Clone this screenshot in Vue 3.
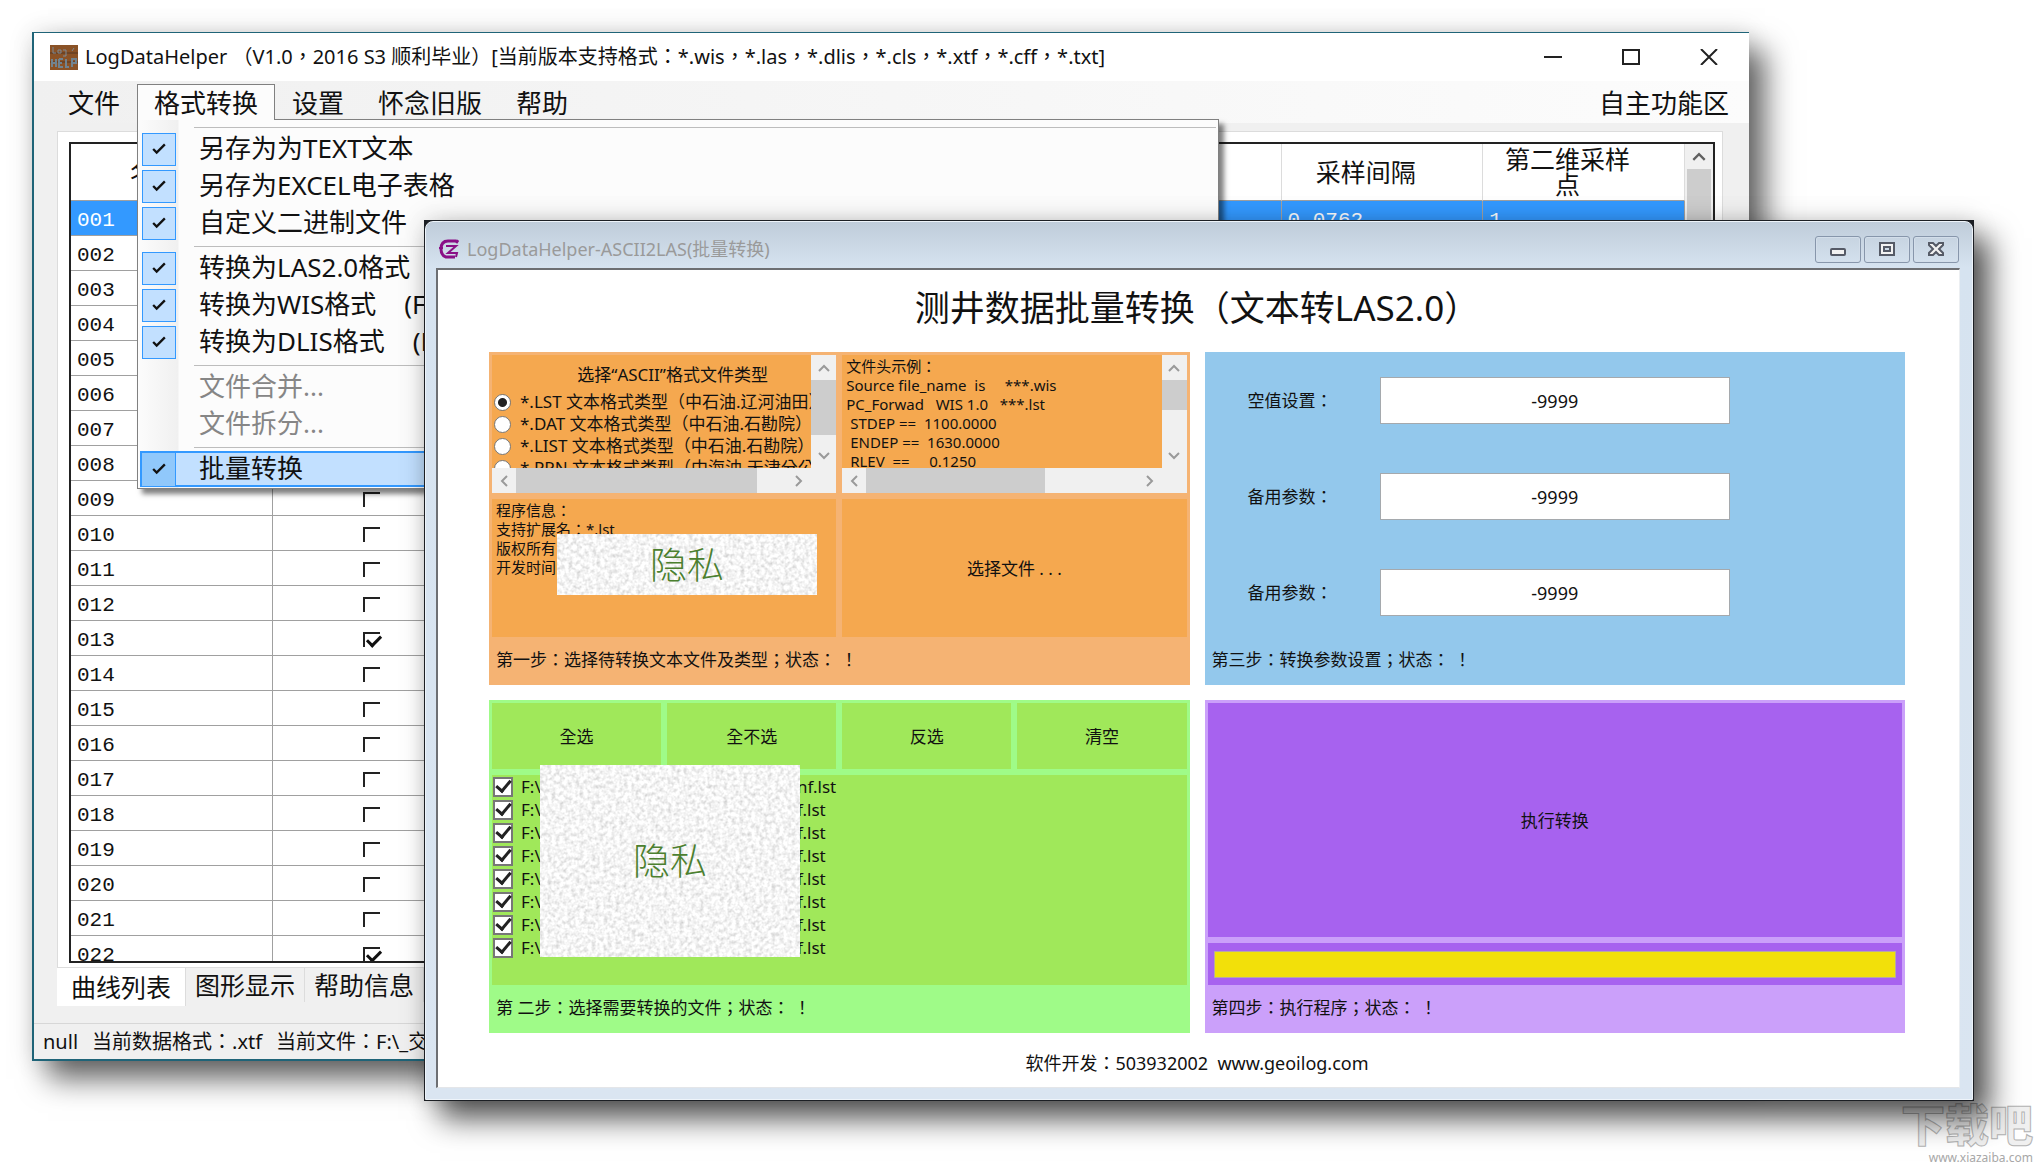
<script setup>
import { ref } from 'vue'

const menus = [
  { label: '文件' },
  { label: '格式转换', open: true },
  { label: '设置' },
  { label: '怀念旧版' },
  { label: '帮助' },
]

const menuGroups = [
  [
    { label: '另存为为TEXT文本', checked: true },
    { label: '另存为EXCEL电子表格', checked: true },
    { label: '自定义二进制文件', checked: true },
  ],
  [
    { label: '转换为LAS2.0格式', checked: true },
    { label: '转换为WIS格式', hint: '(F', checked: true },
    { label: '转换为DLIS格式', hint: '(F', checked: true },
  ],
  [
    { label: '文件合并...', disabled: true },
    { label: '文件拆分...', disabled: true },
  ],
  [{ label: '批量转换', checked: true, active: true }],
]

const curves = ref(
  Array.from({ length: 22 }, (_, i) => ({
    id: String(i + 1).padStart(3, '0'),
    checked: i === 12 || i === 21,
    step: i === 0 ? '0.0762' : '',
    points: i === 0 ? '1' : '',
  }))
)

const tabs = ['曲线列表', '图形显示', '帮助信息']

const fileType = ref(0)
const fileTypes = [
  '*.LST 文本格式类型（中石油.辽河油田）',
  '*.DAT 文本格式类型（中石油.石勘院）',
  '*.LIST 文本格式类型（中石油.石勘院）',
  '*.PRN 文本格式类型（中海油.天津分公司）',
]

const headerSample = [
  '文件头示例：',
  'Source file_name  is     ***.wis',
  'PC_Forwad   WIS 1.0   ***.lst',
  ' STDEP ==  1100.0000',
  ' ENDEP ==  1630.0000',
  ' RLEV  ==     0.1250',
].join('\n')

const programInfo = ['程序信息：', '支持扩展名：*.lst', '版权所有', '开发时间'].join('\n')

const params = ref([
  { id: 'null-value', label: '空值设置：', value: '-9999' },
  { id: 'spare-1', label: '备用参数：', value: '-9999' },
  { id: 'spare-2', label: '备用参数：', value: '-9999' },
])

const selectActions = ['全选', '全不选', '反选', '清空']
const files = ref(
  Array.from({ length: 8 }, (_, i) => ({ tail: i === 0 ? 'nf.lst' : 'f.lst', checked: true }))
)
</script>

<template>
  <div class="desktop">
    <svg class="defs" aria-hidden="true">
      <filter id="grain" x="0" y="0" width="100%" height="100%">
        <feTurbulence type="fractalNoise" baseFrequency="0.25" numOctaves="2" seed="4" />
        <feColorMatrix type="matrix" values="0.7 0 0 0 0.56  0.7 0 0 0 0.56  0.7 0 0 0 0.56  0 0 0 0 1" />
      </filter>
    </svg>

    <section class="main-window">
      <header class="main-title">
        <svg class="app-icon" viewBox="0 0 28 25" aria-hidden="true">
          <rect width="28" height="25" fill="#8a5226" />
          <path d="M0 8h28M0 17h28" stroke="#6f4424" stroke-width="2" />
          <path d="M3 2v6h3M8 5h3v3h-3zM13 5h3v6h-3M24 3l-2 3" stroke="#7d8a96" stroke-width="1" fill="none" />
          <path d="M2 14v8M6 14v8M2 18h4M9 14v8h4M9 14h4M9 18h3M16 14v8h3M22 22v-8h4v4h-4" stroke="#71838f" stroke-width="2" fill="none" />
        </svg>
        <h1>LogDataHelper （V1.0，2016 S3 顺利毕业）[当前版本支持格式：*.wis，*.las，*.dlis，*.cls，*.xtf，*.cff，*.txt]</h1>
        <div class="main-controls">
          <button type="button" aria-label="最小化"><svg viewBox="0 0 18 16"><path d="M0 8h18" /></svg></button>
          <button type="button" aria-label="最大化"><svg viewBox="0 0 18 16"><path d="M1 1h16v14H1z" /></svg></button>
          <button type="button" aria-label="关闭"><svg viewBox="0 0 18 16"><path d="M1 0l16 16M17 0L1 16" /></svg></button>
        </div>
      </header>

      <nav class="menubar">
        <div v-for="m in menus" :key="m.label" class="menu">
          <button type="button" class="menu-head" :class="{ open: m.open }">{{ m.label }}</button>
          <div v-if="m.open" class="dropdown">
            <div v-for="(group, g) in menuGroups" :key="g" class="menu-group">
              <button
                v-for="item in group"
                :key="item.label"
                type="button"
                class="menu-item"
                :class="{ active: item.active }"
                :disabled="item.disabled"
              >
                <span class="tick" :class="{ on: item.checked }">
                  <svg v-if="item.checked" viewBox="0 0 12 10"><path d="M1 5l3 3 7-7" /></svg>
                </span>
                <span class="item-text">{{ item.label }}</span>
                <span v-if="item.hint" class="item-text hint">{{ item.hint }}</span>
              </button>
            </div>
          </div>
        </div>
        <button type="button" class="menu-head zone">自主功能区</button>
      </nav>

      <div class="workspace">
        <div class="page">
          <div class="grid">
            <div class="grid-view">
              <table>
                <thead>
                  <tr>
                    <th>名称</th>
                    <th></th><th></th><th></th><th></th><th></th>
                    <th>采样间隔</th>
                    <th>第二维采样点</th>
                  </tr>
                </thead>
                <tbody>
                  <tr v-for="(c, i) in curves" :key="c.id" :class="{ selected: i === 0 }">
                    <td>{{ c.id }}</td>
                    <td class="mark"><input v-model="c.checked" type="checkbox" :aria-label="c.id" /></td>
                    <td></td><td></td><td></td><td></td>
                    <td>{{ c.step }}</td>
                    <td>{{ c.points }}</td>
                  </tr>
                </tbody>
              </table>
            </div>
            <div class="grid-scroll">
              <svg viewBox="0 0 14 10"><path d="M2 8l5-5 5 5" /></svg>
              <div class="grid-thumb"></div>
            </div>
          </div>
        </div>
        <div class="tabs">
          <button v-for="(t, i) in tabs" :key="t" type="button" :class="{ current: i === 0 }">{{ t }}</button>
        </div>
      </div>

      <footer class="status">
        <span>null</span><span>当前数据格式：.xtf</span><span>当前文件：F:\_交</span>
      </footer>
    </section>

    <section class="dialog">
      <div class="frame">
        <header class="dialog-title">
          <svg class="dialog-icon" viewBox="0 0 20 20" aria-hidden="true">
            <path d="M19 1l-2 3M17 2H9C4 2 2 5 2 10c0 4 2 7 5 8h9" fill="none" stroke="#8a0f86" stroke-width="3" />
            <path d="M0 9h4M7 7h10l-8 7h9l-1 4" fill="none" stroke="#8a0f86" stroke-width="2" />
          </svg>
          <h2>LogDataHelper-ASCII2LAS(批量转换)</h2>
          <div class="dialog-controls">
            <button type="button" aria-label="最小化"><svg viewBox="0 0 18 16"><rect x="2" y="8" width="14" height="6" rx="1" /></svg></button>
            <button type="button" aria-label="还原"><svg viewBox="0 0 18 16"><path fill-rule="evenodd" d="M2 2h14v12H2zM6 6h6v4H6z" /></svg></button>
            <button type="button" aria-label="关闭"><svg viewBox="0 0 18 16"><path d="M2 2h4l3 3 3-3h4v2l-4 4 4 4v2h-4l-3-3-3 3H2v-2l4-4-4-4z" /></svg></button>
          </div>
        </header>

        <main class="client">
          <h3>测井数据批量转换（文本转LAS2.0）</h3>
          <div class="steps">
            <section class="step orange">
              <div class="cells two">
                <div class="scroller">
                  <div class="view types">
                    <p class="types-head">选择“ASCII”格式文件类型</p>
                    <label v-for="(t, i) in fileTypes" :key="t">
                      <input v-model="fileType" type="radio" name="file-type" :value="i" />{{ t }}
                    </label>
                  </div>
                  <div class="vbar">
                    <svg viewBox="0 0 12 8"><path d="M1 7l5-5 5 5" /></svg>
                    <div class="vthumb long"></div>
                    <svg viewBox="0 0 12 8"><path d="M1 1l5 5 5-5" /></svg>
                  </div>
                  <div class="hbar">
                    <svg viewBox="0 0 8 12"><path d="M7 1L2 6l5 5" /></svg>
                    <div class="hthumb long"></div>
                    <svg viewBox="0 0 8 12"><path d="M1 1l5 5-5 5" /></svg>
                  </div>
                </div>
                <div class="scroller">
                  <pre class="view small">{{ headerSample }}</pre>
                  <div class="vbar">
                    <svg viewBox="0 0 12 8"><path d="M1 7l5-5 5 5" /></svg>
                    <div class="vthumb"></div>
                    <svg viewBox="0 0 12 8"><path d="M1 1l5 5 5-5" /></svg>
                  </div>
                  <div class="hbar">
                    <svg viewBox="0 0 8 12"><path d="M7 1L2 6l5 5" /></svg>
                    <div class="hthumb"></div>
                    <svg viewBox="0 0 8 12"><path d="M1 1l5 5-5 5" /></svg>
                  </div>
                </div>
                <div class="cell info">
                  <pre class="small">{{ programInfo }}</pre>
                  <div class="privacy info-mask"><svg><rect width="100%" height="100%" filter="url(#grain)" /></svg><span>隐私</span></div>
                </div>
                <button type="button" class="cell">选择文件 . . .</button>
              </div>
              <p class="step-text">第一步：选择待转换文本文件及类型；状态： ！</p>
            </section>

            <section class="step blue">
              <div class="params">
                <div v-for="p in params" :key="p.id" class="param">
                  <label :for="p.id">{{ p.label }}</label>
                  <input :id="p.id" v-model="p.value" type="text" />
                </div>
              </div>
              <p class="step-text">第三步：转换参数设置；状态： ！</p>
            </section>

            <section class="step green">
              <div class="cells four">
                <button v-for="a in selectActions" :key="a" type="button" class="cell">{{ a }}</button>
              </div>
              <div class="cell files">
                <label v-for="(f, i) in files" :key="i">
                  <input v-model="f.checked" type="checkbox" />
                  <span class="drive">F:\</span><span>{{ f.tail }}</span>
                </label>
                <div class="privacy file-mask"><svg><rect width="100%" height="100%" filter="url(#grain)" /></svg><span>隐私</span></div>
              </div>
              <p class="step-text">第 二步：选择需要转换的文件；状态： ！</p>
            </section>

            <section class="step purple">
              <button type="button" class="cell run">执行转换</button>
              <div class="cell bar"><div class="progress" role="progressbar" aria-label="执行转换"></div></div>
              <p class="step-text">第四步：执行程序；状态： ！</p>
            </section>
          </div>
          <p class="credit">软件开发：503932002&nbsp; www.geoilog.com</p>
        </main>
      </div>
    </section>

    <div class="watermark">
      <strong>下载吧</strong>
      <span>www.xiazaiba.com</span>
    </div>
  </div>
</template>

<style>
body {
  background: #fff;
}
</style>

<style scoped>
* {
  box-sizing: border-box;
}

.desktop {
  position: relative;
  min-height: 100vh;
  overflow: hidden;
  background: #fff;
  color: #111;
  font-family: "Noto Sans", "Noto Sans CJK TC", "Noto Sans CJK SC", sans-serif;
  font-size: 17px;
  line-height: 22px;
}

.defs {
  position: absolute;
  width: 0;
  height: 0;
}

h1, h2, h3, p, pre {
  margin: 0;
  font-family: inherit;
  font-weight: 400;
}

button {
  margin: 0;
  padding: 0;
  border: 0;
  background: none;
  color: inherit;
  font: inherit;
}

/* main window */
.main-window {
  position: absolute;
  z-index: 0;
  inset: 32px 290px 105px 32px;
  display: flex;
  flex-direction: column;
  border: solid #1f6478;
  border-width: 1px 0 2px 2px;
  background: #f0f0f0;
  box-shadow: 16px 18px 28px rgba(0, 0, 0, 0.6), 0 0 24px rgba(0, 0, 0, 0.12);
}

.main-title {
  display: flex;
  align-items: center;
  height: 48px;
  padding: 0 31px 0 16px;
  background: #fff;
}

.app-icon {
  width: 28px;
  height: 25px;
  margin-right: 7px;
}

.main-title h1 {
  flex: 1;
  font-size: 20px;
  line-height: 28px;
  white-space: nowrap;
}

.main-controls {
  display: flex;
  gap: 60px;
}

.main-controls svg {
  display: block;
  width: 18px;
  height: 16px;
  fill: none;
  stroke: #222;
  stroke-width: 2;
}

.menubar {
  display: flex;
  align-items: flex-start;
  height: 42px;
  padding: 3px 3px 0 17px;
  background: linear-gradient(90deg, #f0f0f0, #fcfcfc);
  font-size: 26px;
}

.menu {
  position: relative;
}

.menu-head {
  height: 36px;
  padding: 0 16px;
  border: 1px solid transparent;
  border-bottom: 0;
  line-height: 34px;
}

.menu-head.open {
  position: relative;
  z-index: 3;
  background: #fcfcfc;
  border-color: #808080;
}

.zone {
  margin-left: auto;
}

.dropdown {
  position: absolute;
  z-index: 2;
  top: 35px;
  left: 0;
  width: 1082px;
  padding: 7px 2px 0;
  border: 1px solid #808080;
  background: linear-gradient(90deg, #fcfcfc, #f0f0f0 40px, #fcfcfc 41px);
  box-shadow: 5px 5px 5px rgba(0, 0, 0, 0.5);
}

.menu-group {
  padding: 4px 0;
  background: linear-gradient(#bdbdbd, #bdbdbd) 54px 0 / 100% 1px no-repeat;
}

.menu-group:last-child {
  padding-bottom: 0;
}

.menu-item {
  display: flex;
  align-items: center;
  width: 100%;
  height: 36px;
  margin-bottom: 1px;
  border: 2px solid transparent;
  text-align: left;
  line-height: 32px;
}

.menu-item:disabled {
  color: #868686;
}

.menu-item.active {
  border-color: #3399ff;
  background: #c2e0ff;
}

.item-text {
  padding-bottom: 2px;
}

.tick {
  display: flex;
  align-items: center;
  justify-content: center;
  width: 34px;
  height: 33px;
  margin-right: 23px;
}

.tick.on {
  border: 1px solid #3399ff;
  background: #c2e0ff;
}

.active .tick.on {
  border-width: 0 1px 0 0;
  background: #90c8fb;
}

.tick svg {
  width: 14px;
  height: 12px;
  fill: none;
  stroke: #111;
  stroke-width: 2;
}

.hint {
  margin-left: 28px;
}

.workspace {
  display: flex;
  flex: 1;
  flex-direction: column;
  min-height: 0;
  padding: 8px 26px 17px 23px;
}

.page {
  flex: 1;
  min-height: 0;
  padding: 10px 7px 4px 11px;
  border: 1px solid #dcdcdc;
  background: #fff;
}

.grid {
  display: flex;
  height: 100%;
  border: 2px solid #222;
}

.grid-view {
  flex: 1;
  overflow: hidden;
}

table {
  width: 100%;
  border-collapse: separate;
  border-spacing: 0;
  table-layout: fixed;
}

th {
  height: 57px;
  padding: 0 52px 0 20px;
  border-right: 1px solid #dcdcdc;
  border-bottom: 1px solid #a0a0a0;
  font-size: 25px;
  font-weight: 400;
  line-height: 25px;
}

td {
  height: 35px;
  padding: 6px 6px 0;
  border-right: 1px solid #a0a0a0;
  border-bottom: 1px solid #a0a0a0;
  font-family: "Liberation Mono", monospace;
  font-size: 21px;
  line-height: 28px;
}

.selected td {
  background: #3399ff;
  color: #fff;
}

.mark {
  padding: 4px 9px 0 6px;
  text-align: center;
}

.mark input {
  width: 17px;
  height: 15px;
  margin: 0;
  border: solid #222;
  border-width: 2px 0 0 2px;
  appearance: none;
  vertical-align: middle;
}

.mark input:checked::before {
  content: "";
  display: block;
  width: 11px;
  height: 6px;
  margin: 1px 0 0 2px;
  border: solid #111;
  border-width: 0 0 3px 3px;
  transform: rotate(-45deg);
}

.grid-scroll {
  display: flex;
  flex-direction: column;
  align-items: center;
  width: 28px;
  background: #f0f0f0;
}

.grid-scroll svg {
  width: 16px;
  height: 25px;
  fill: none;
  stroke: #606060;
  stroke-width: 2;
}

.grid-thumb {
  width: 24px;
  height: 240px;
  background: #cdcdcd;
}

.tabs {
  display: flex;
  align-items: flex-start;
  height: 38px;
}

.tabs button {
  height: 34px;
  padding: 0 9px;
  border-right: 1px solid #dcdcdc;
  font-size: 25px;
  line-height: 28px;
}

.tabs .current {
  height: 38px;
  padding: 0 14px;
  background: #fff;
  line-height: 32px;
}

.status {
  display: flex;
  gap: 14px;
  height: 36px;
  padding-left: 9px;
  border-top: 1px solid #d7d7d7;
  font-size: 20px;
  line-height: 36px;
}

/* dialog */
.dialog {
  position: absolute;
  z-index: 1;
  top: 220px;
  right: 65px;
  left: 424px;
  padding: 1px;
  background: #1c1f24;
  box-shadow: 16px 18px 28px rgba(0, 0, 0, 0.65), 0 0 24px rgba(0, 0, 0, 0.15);
}

.frame {
  padding: 0 12px 11px 10px;
  border: 1px solid #eef4fa;
  border-radius: 8px 8px 0 0;
  background: linear-gradient(#bfccda, #d6e3f0 46px, #dae5f1);
}

.dialog-title {
  display: flex;
  align-items: center;
  height: 46px;
}

.dialog-icon {
  width: 20px;
  height: 20px;
  margin: 8px 8px 0 3px;
}

.dialog-title h2 {
  flex: 1;
  padding-top: 8px;
  color: #9a9a9a;
  font-size: 18px;
}

.dialog-controls {
  display: flex;
  gap: 3px;
  padding: 8px 1px 0 0;
}

.dialog-controls button {
  display: flex;
  align-items: center;
  justify-content: center;
  width: 46px;
  height: 27px;
  border: 1px solid #8796ab;
  border-radius: 3px;
  box-shadow: inset 0 0 0 1px #d3deea;
}

.dialog-controls svg {
  width: 18px;
  height: 16px;
  fill: #f2f2f2;
  stroke: #555a66;
  stroke-width: 2;
}

.client {
  padding: 0 54px 12px 51px;
  border: solid;
  border-width: 2px 1px 1px 2px;
  border-color: #6d6f73 #eceff2 #e4e6e9 #6d6f73;
  background: #fff;
}

.client h3 {
  padding: 14px 0 20px;
  font-size: 35px;
  line-height: 48px;
  text-align: center;
}

.steps {
  display: grid;
  grid-template-columns: 1fr 1fr;
  gap: 15px;
}

.step {
  display: flex;
  flex-direction: column;
  min-width: 0;
  height: 333px;
  padding: 3px;
}

.step-text {
  margin-top: auto;
  padding: 0 4px;
  line-height: 44px;
}

.orange { background: #f5b373; }
.blue { background: #93c8ec; }
.green { background: #9ffb88; }
.purple { background: #cba0fa; }

.cells {
  display: grid;
  gap: 6px;
}

.two {
  grid-template-columns: 1fr 1fr;
  grid-template-rows: 138px 138px;
}

.four {
  grid-template-columns: repeat(4, 1fr);
  grid-template-rows: 66px;
}

.cell,
.scroller {
  min-width: 0;
}

button.cell {
  padding-top: 2px;
}

.orange .cell,
.scroller {
  background: #f5a84f;
}

.green .cell { background: #a0e85a; }
.purple .cell { background: #a762ef; }

.scroller {
  display: grid;
  grid-template-columns: 1fr 25px;
  grid-template-rows: 113px 25px;
}

.view {
  min-width: 0;
  overflow: hidden;
  white-space: pre;
}

.small {
  padding: 2px 4px;
  font-size: 15px;
  line-height: 19px;
}

.types-head {
  padding: 4px 0 0 42px;
  line-height: 32px;
  text-align: center;
}

.types label {
  display: flex;
  align-items: center;
  gap: 9px;
  height: 22px;
  padding-left: 2px;
}

.types input {
  flex: none;
  width: 17px;
  height: 17px;
  margin: 0;
  border: 1px solid #777;
  border-radius: 50%;
  background: #fff;
  appearance: none;
}

.types input:checked {
  background: radial-gradient(#222 0 4px, #fff 5px);
}

.vbar,
.hbar {
  display: flex;
  align-items: center;
  background: #f0f0f0;
}

.vbar {
  flex-direction: column;
}

.hbar {
  grid-column: 1 / 3;
}

.vbar svg,
.hbar svg {
  flex: none;
  width: 12px;
  height: 12px;
  margin: 6px;
  fill: none;
  stroke: #9a9a9a;
  stroke-width: 2;
}

.vbar svg {
  margin: 7px 6px 6px;
}

.vthumb {
  width: 100%;
  height: 30px;
  margin-bottom: auto;
  background: #cdcdcd;
}

.vthumb.long {
  height: 55px;
}

.hthumb {
  width: 52%;
  height: 100%;
  background: #cdcdcd;
}

.hthumb.long {
  width: 70%;
}

.hbar svg:last-child {
  margin-right: 31px;
  margin-left: auto;
}

.info,
.files {
  position: relative;
}

.privacy {
  position: absolute;
  display: grid;
  place-items: center;
  width: 260px;
  color: #4c8030;
  font-size: 37px;
  font-weight: 300;
  line-height: 48px;
}

.privacy svg,
.privacy span {
  grid-area: 1 / 1;
}

.privacy svg {
  width: 100%;
  height: 100%;
}

.privacy span {
  z-index: 1;
}

.info-mask {
  top: 35px;
  left: 65px;
  height: 61px;
}

.file-mask {
  top: -10px;
  left: 48px;
  height: 192px;
}

.params {
  display: flex;
  flex-direction: column;
  gap: 49px;
  margin: 0 -3px;
  padding-top: 22px;
}

.param {
  display: grid;
  grid-template-columns: 1fr 50% 1fr;
  align-items: center;
}

.param label {
  padding-left: 43px;
}

.param input {
  width: 100%;
  height: 47px;
  border: 1px solid #a5a9ad;
  background: #fff;
  color: inherit;
  font: inherit;
  font-size: 18px;
  text-align: center;
}

.files {
  height: 210px;
  margin-top: 6px;
}

.files label {
  display: flex;
  align-items: center;
  height: 23px;
  padding-left: 1px;
}

.files input {
  display: flex;
  align-items: center;
  justify-content: center;
  width: 20px;
  height: 20px;
  margin: 0 8px 0 0;
  border: 2px solid #777;
  background: #fff;
  appearance: none;
}

.files input:checked::before {
  content: "";
  width: 12px;
  height: 6px;
  margin-top: -4px;
  border: solid #222;
  border-width: 0 0 3px 3px;
  transform: rotate(-50deg);
}

.drive {
  width: 276px;
}

.run {
  height: 234px;
}

.bar {
  height: 42px;
  margin-top: 6px;
  padding: 8px 6px;
}

.progress {
  height: 27px;
  border: 1px solid #b9a9a0;
  background: #f2e00a;
}

.credit {
  padding: 19px 0 1px;
  font-size: 18px;
  text-align: center;
}

.watermark {
  position: absolute;
  right: 6px;
  bottom: 1px;
  display: flex;
  flex-direction: column;
  align-items: flex-end;
  color: #f0f0f0;
}

.watermark strong {
  font-size: 44px;
  font-weight: 900;
  line-height: 52px;
  -webkit-text-stroke: 1px #b4b4b4;
}

.watermark span {
  font-size: 12px;
  line-height: 14px;
  color: #a8a8a8;
}
</style>
